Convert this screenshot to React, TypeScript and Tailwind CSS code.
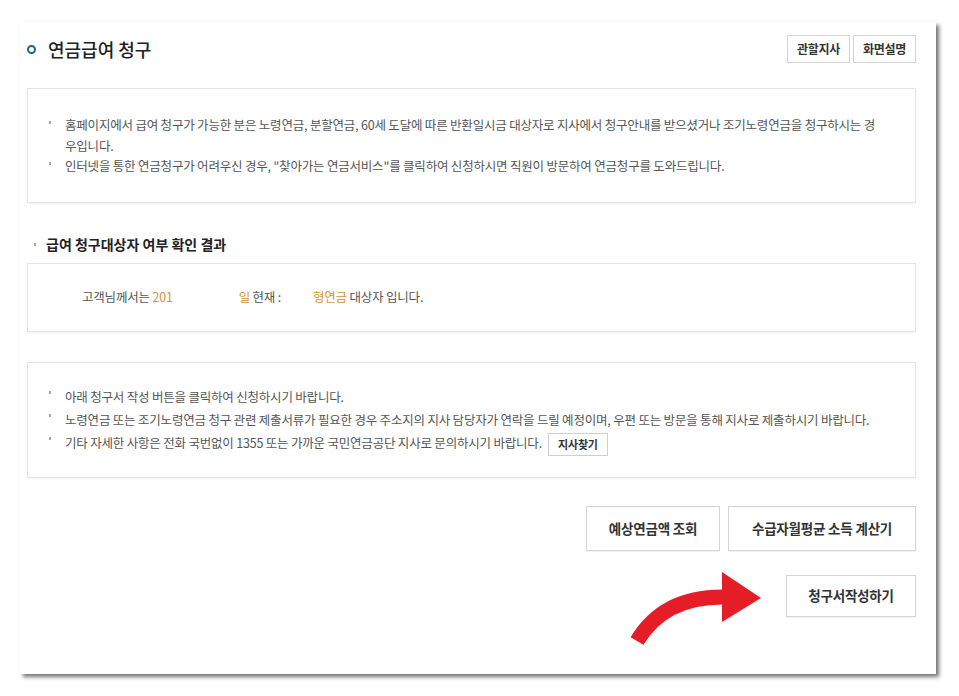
import React from 'react';

const Bullet = () => (
	<span className="w-[16px] shrink-0 pt-[6px]">
		<span className="block w-[2px] h-[3px] bg-[#a8a8a8]"></span>
	</span>
);

const Item = ({ children }: { children: React.ReactNode }) => (
	<li className="flex">
		<Bullet />
		<span>{children}</span>
	</li>
);

const Orange = ({ children }: { children: React.ReactNode }) => (
	<span className="text-[#d8923a]">{children}</span>
);

export default function App() {
	return (
		<div className="w-[959px] h-[696px] bg-white overflow-hidden pt-[22px] pl-[20px] font-['Noto_Sans_CJK_KR','Noto_Sans',sans-serif]">
			<div className="relative w-[916px] h-[652px] bg-white shadow-[3px_3px_4px_rgba(0,0,0,0.55)] pl-[7px] pr-[20px] pt-[13px] flex flex-col">
				{/* header */}
				<div className="flex items-center justify-between h-[28px]">
					<div className="flex items-center">
						<span className="w-[9px] h-[9px] rounded-full border-[2.5px] border-[#1f6394]"></span>
						<h1 className="ml-[12px] text-[18px] font-medium text-[#222]">연금급여 청구</h1>
					</div>
					<div className="flex gap-[3px]">
						<button className="w-[63px] h-[28px] border border-[#d3d3d3] bg-white text-[12px] font-bold text-[#333] tracking-[-0.3px]">관할지사</button>
						<button className="w-[63px] h-[28px] border border-[#d3d3d3] bg-white text-[12px] font-bold text-[#333] tracking-[-0.3px]">화면설명</button>
					</div>
				</div>

				{/* notice */}
				<div className="mt-[25px] border border-[#e4e4e4] shadow-[0_1px_2px_rgba(0,0,0,0.06)] pt-[26px] pb-[25px] pl-[21px] pr-[36px]">
					<ul className="text-[12.5px] leading-[20.5px] tracking-[-0.2px] text-[#555]">
						<Item>홈페이지에서 급여 청구가 가능한 분은 노령연금, 분할연금, 60세 도달에 따른 반환일시금 대상자로 지사에서 청구안내를 받으셨거나 조기노령연금을 청구하시는 경우입니다.</Item>
						<Item>인터넷을 통한 연금청구가 어려우신 경우, "찾아가는 연금서비스"를 클릭하여 신청하시면 직원이 방문하여 연금청구를 도와드립니다.</Item>
					</ul>
				</div>

				{/* result heading */}
				<div className="mt-[33px] h-[18px] flex items-center pl-[7px]">
					<span className="w-[12px] shrink-0">
						<span className="block w-[2px] h-[3px] bg-[#a8a8a8]"></span>
					</span>
					<h2 className="text-[14px] font-semibold text-[#222]">급여 청구대상자 여부 확인 결과</h2>
				</div>

				<div className="mt-[9px] h-[69px] flex items-center border border-[#e4e4e4] shadow-[0_1px_2px_rgba(0,0,0,0.06)] pl-[54px] text-[12.5px] tracking-[-0.2px] text-[#555]">
					<p>
						고객님께서는 <Orange>201</Orange>
						<span className="inline-block w-[66px]"></span>
						<Orange>일</Orange> 현재 :
						<span className="inline-block w-[32px]"></span>
						<Orange>형연금</Orange> 대상자 입니다.
					</p>
				</div>

				{/* guide */}
				<div className="mt-[30px] border border-[#e4e4e4] shadow-[0_1px_2px_rgba(0,0,0,0.06)] pt-[22px] pb-[21px] pl-[21px] pr-[25px]">
					<ul className="text-[12.5px] leading-[23px] tracking-[-0.2px] text-[#555]">
						<Item>아래 청구서 작성 버튼을 클릭하여 신청하시기 바랍니다.</Item>
						<Item>노령연금 또는 조기노령연금 청구 관련 제출서류가 필요한 경우 주소지의 지사 담당자가 연락을 드릴 예정이며, 우편 또는 방문을 통해 지사로 제출하시기 바랍니다.</Item>
						<Item>
							기타 자세한 사항은 전화 국번없이 1355 또는 가까운 국민연금공단 지사로 문의하시기 바랍니다.
							<button className="ml-[6px] w-[60px] h-[23px] align-middle border border-[#cfcfcf] bg-white text-[11px] font-bold text-[#333] leading-[21px]">지사찾기</button>
						</Item>
					</ul>
				</div>

				{/* actions */}
				<div className="mt-[28px] flex justify-end gap-[8px]">
					<button className="w-[134px] h-[45px] border border-[#d5d5d5] bg-white shadow-[0_1px_1px_rgba(0,0,0,0.05)] text-[13.5px] font-bold tracking-[-0.2px] text-[#333]">예상연금액 조회</button>
					<button className="w-[188px] h-[45px] border border-[#d5d5d5] bg-white shadow-[0_1px_1px_rgba(0,0,0,0.05)] text-[13.5px] font-bold tracking-[-0.2px] text-[#333]">수급자월평균 소득 계산기</button>
				</div>
				<div className="mt-[24px] flex justify-end">
					<button className="w-[130px] h-[42px] border border-[#d5d5d5] bg-white shadow-[0_1px_1px_rgba(0,0,0,0.05)] text-[13.5px] font-bold tracking-[-0.2px] text-[#333]">청구서작성하기</button>
				</div>

				{/* red pointer arrow */}
				<svg className="absolute left-[592px] top-[538px]" width="160" height="100" viewBox="0 0 160 100">
					<path d="M25 81 Q52 36 113 37" fill="none" stroke="#e51d27" strokeWidth="15" />
					<polygon points="110,12 149,38 110,62" fill="#e51d27" />
				</svg>
			</div>
		</div>
	);
}
